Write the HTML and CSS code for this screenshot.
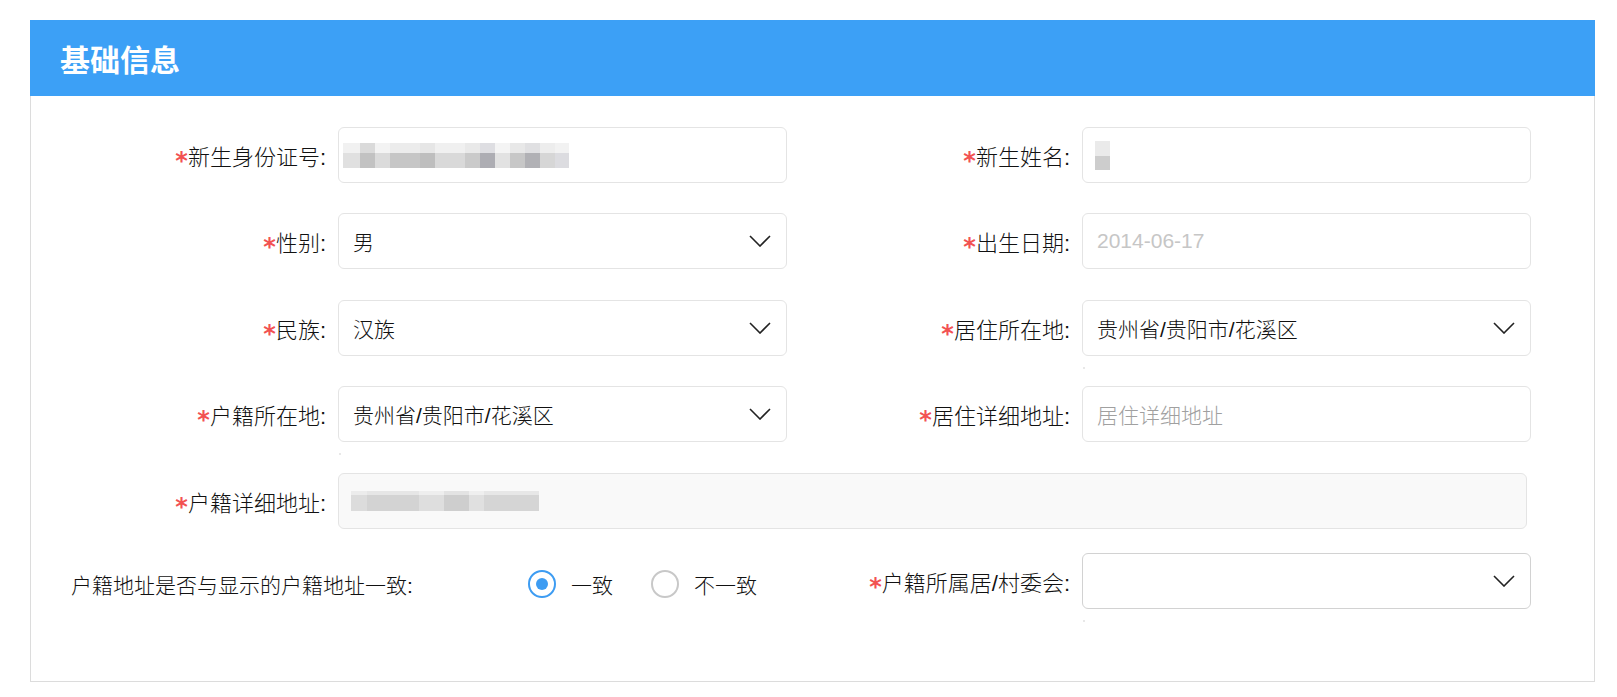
FILE: index.html
```html
<!DOCTYPE html>
<html lang="zh-CN">
<head>
<meta charset="utf-8">
<title>基础信息</title>
<link rel="stylesheet" href="styles.css">
</head>
<body>
<section class="card">
  <header class="card-head"><h2 class="card-title">基础信息</h2></header>
  <form class="form">
    <label class="lbl"><span class="req">*</span>新生身份证号:</label>
    <div class="field"><span class="mosaic mosaic-id"></span></div>
    <label class="lbl"><span class="req">*</span>新生姓名:</label>
    <div class="field"><span class="mosaic mosaic-name"></span></div>

    <label class="lbl"><span class="req">*</span>性别:</label>
    <div class="field select"><span class="val">男</span><svg class="chev" viewBox="0 0 22 12"><polyline points="1,1 11,11 21,1"/></svg></div>
    <label class="lbl"><span class="req">*</span>出生日期:</label>
    <div class="field"><span class="val muted">2014-06-17</span></div>

    <label class="lbl"><span class="req">*</span>民族:</label>
    <div class="field select"><span class="val">汉族</span><svg class="chev" viewBox="0 0 22 12"><polyline points="1,1 11,11 21,1"/></svg></div>
    <label class="lbl"><span class="req">*</span>居住所在地:</label>
    <div class="field select cascader"><span class="val">贵州省/贵阳市/花溪区</span><svg class="chev" viewBox="0 0 22 12"><polyline points="1,1 11,11 21,1"/></svg></div>

    <label class="lbl"><span class="req">*</span>户籍所在地:</label>
    <div class="field select cascader"><span class="val">贵州省/贵阳市/花溪区</span><svg class="chev" viewBox="0 0 22 12"><polyline points="1,1 11,11 21,1"/></svg></div>
    <label class="lbl"><span class="req">*</span>居住详细地址:</label>
    <div class="field"><span class="val placeholder">居住详细地址</span></div>

    <label class="lbl"><span class="req">*</span>户籍详细地址:</label>
    <div class="field wide"><span class="mosaic mosaic-addr"></span></div>

    <div class="same-group">
      <span class="same-label">户籍地址是否与显示的户籍地址一致:</span>
      <div class="radios">
        <span class="radio"><span class="dot on"></span>一致</span>
        <span class="radio"><span class="dot"></span>不一致</span>
      </div>
    </div>
    <label class="lbl"><span class="req">*</span>户籍所属居/村委会:</label>
    <div class="field select cascader focus"><span class="val"></span><svg class="chev" viewBox="0 0 22 12"><polyline points="1,1 11,11 21,1"/></svg></div>
  </form>
</section>
</body>
</html>
```
FILE: styles.css
```css
* { box-sizing: border-box; }

body {
  margin: 0;
  padding: 20px 22px 0 30px;
  background: #fff;
  font-family: "Liberation Sans", "Noto Sans CJK SC", sans-serif;
  color: #111;
}

.card {
  width: 1565px;
  border: 1px solid #dcdcdc;
  border-top: none;
}

.card-head {
  margin: 0 -1px;
  height: 76px;
  background: #3ca0f6;
  display: flex;
  align-items: center;
  padding-left: 30px;
}

.card-title {
  margin: 0;
  font-family: "Noto Sans CJK SC", sans-serif;
  font-size: 30px;
  font-weight: 700;
  line-height: 1;
  color: #fff;
}

.form {
  display: grid;
  grid-template-columns: 295px 449px 295px 449px;
  grid-template-rows: 86px 87px 86px 87px 80px 56px;
  align-items: start;
  padding: 31px 0 72px 12px;
}

.lbl {
  height: 56px;
  display: flex;
  align-items: center;
  justify-content: flex-end;
  padding-right: 12px;
  font-size: 22px;
  font-weight: 300;
  white-space: nowrap;
  color: #111;
}

.req {
  align-self: center;
  padding-top: 12px;
  font-family: "DejaVu Sans", sans-serif;
  font-size: 24px;
  font-weight: 700;
  line-height: 1;
  color: #f25252;
}

.field {
  position: relative;
  height: 56px;
  border: 1px solid #e4e4e4;
  border-radius: 6px;
  background: #fff;
  display: flex;
  align-items: center;
  padding: 0 15px 0 14px;
  font-size: 21px;
  font-weight: 300;
  color: #111;
}

.field.wide {
  grid-column: 2 / span 3;
  margin-right: 4px;
  background: #f9f9f9;
}

.field.focus { border-color: #d2d2d2; }

.val { white-space: nowrap; }
.val.muted { color: #c6c6c6; }
.val.placeholder { color: #a0a0a0; }

.chev {
  flex-shrink: 0;
  margin-left: auto;
  width: 22px;
  height: 12px;
  fill: none;
  stroke: #222;
  stroke-width: 1.6;
}

.cascader::after {
  content: "";
  position: absolute;
  left: 0;
  top: calc(100% + 12px);
  width: 2px;
  height: 2px;
  background: #e8e8e8;
}

.mosaic { display: block; flex-shrink: 0; }

.mosaic-id {
  width: 226px;
  height: 25px;
  margin-left: -10px;
  background:
    linear-gradient(to right,
      #f1f1f1 0 17px, #dadada 17px 32px, #f3f3f3 32px 47px, #ececec 47px 77px,
      #e6e6e6 77px 92px, #f0f0f0 92px 122px, #e9e9e9 122px 137px, #dedee2 137px 152px,
      #f4f4f4 152px 167px, #e8e8e8 167px 182px, #e0e0e2 182px 197px, #ededed 197px 212px,
      #f2f2f2 212px 226px) top / 100% 10px no-repeat,
    linear-gradient(to right,
      #e0e0e0 0 17px, #c2c2c2 17px 32px, #dbdbdb 32px 47px, #c6c6c6 47px 77px,
      #bebebe 77px 92px, #d9d9d9 92px 122px, #cacaca 122px 137px, #adadb3 137px 152px,
      #e2e2e2 152px 167px, #c7c7c7 167px 182px, #b1b1b5 182px 197px, #d6d6d6 197px 212px,
      #dcdce0 212px 226px) bottom / 100% 15px no-repeat;
}

.mosaic-name {
  width: 15px;
  height: 29px;
  margin-left: -2px;
  background:
    linear-gradient(#eaeaea, #eaeaea) top / 100% 15px no-repeat,
    linear-gradient(#cdcdcd, #cdcdcd) bottom / 100% 14px no-repeat;
}

.mosaic-addr {
  width: 188px;
  height: 20px;
  margin-left: -2px;
  background:
    linear-gradient(to right,
      #ececec 0 16px, #e6e6e6 16px 68px, #eeeeee 68px 93px, #e3e3e3 93px 118px,
      #efefef 118px 133px, #e7e7e7 133px 188px) top / 100% 4px no-repeat,
    linear-gradient(to right,
      #dcdcdc 0 16px, #d3d3d3 16px 68px, #dedede 68px 93px, #cecece 93px 118px,
      #e0e0e0 118px 133px, #d5d5d5 133px 188px) bottom / 100% 16px no-repeat;
}

.same-group {
  grid-column: 1 / span 2;
  height: 56px;
  display: flex;
  align-items: center;
  padding: 6px 0 0 28px;
}

.same-label {
  flex-shrink: 0;
  width: 457px;
  font-size: 21px;
  font-weight: 300;
  white-space: nowrap;
  color: #111;
}

.radios { display: flex; align-items: center; flex-shrink: 0; }

.radio {
  display: inline-flex;
  align-items: center;
  gap: 15px;
  margin-right: 38px;
  font-size: 21px;
  font-weight: 300;
  white-space: nowrap;
  color: #111;
}

.radio:last-child { margin-right: 0; }

.dot {
  flex-shrink: 0;
  width: 28px;
  height: 28px;
  border-radius: 50%;
  border: 2px solid #c8c8c8;
  display: flex;
  align-items: center;
  justify-content: center;
}

.dot.on { border-color: #3d9cf2; }

.dot.on::after {
  content: "";
  width: 12px;
  height: 12px;
  border-radius: 50%;
  background: #3d9cf2;
}
```
